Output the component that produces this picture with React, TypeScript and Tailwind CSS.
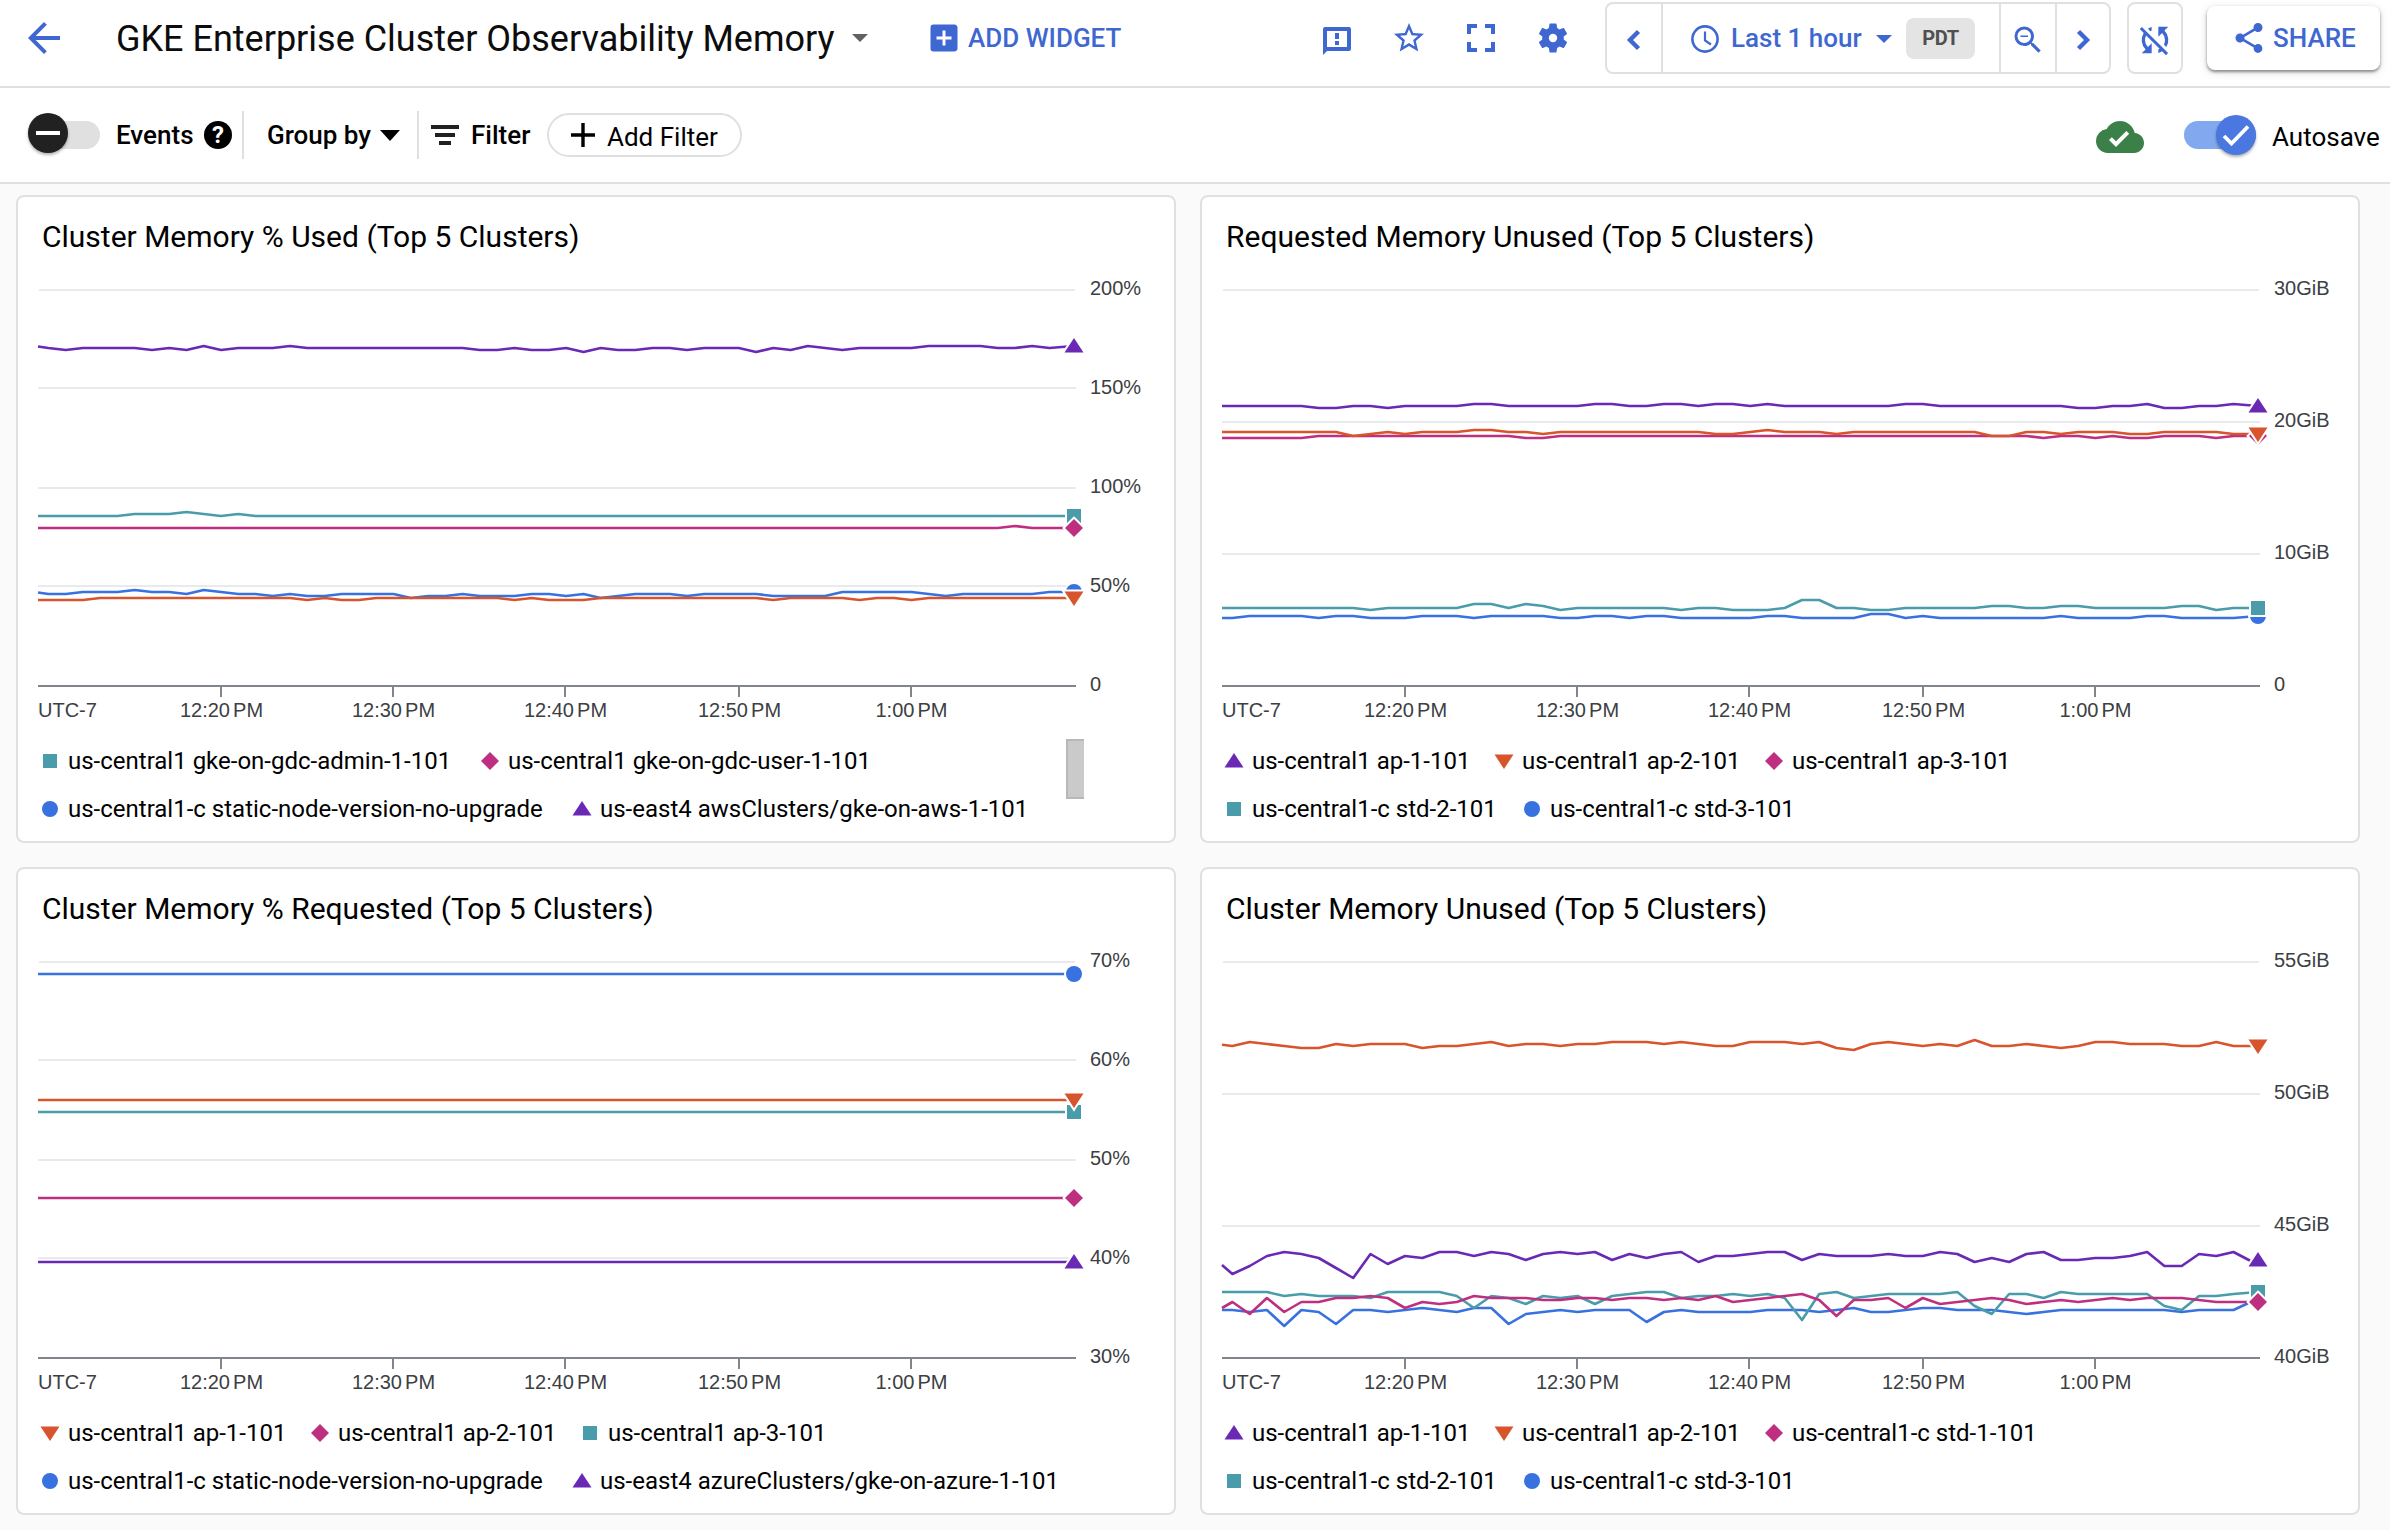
import React from "react";
import { MdArrowBack, MdAddBox, MdStarBorder, MdZoomOut, MdSyncDisabled, MdShare, MdCloudDone } from "react-icons/md";

type Shape = "square" | "diamond" | "circle" | "up" | "down";

const TEAL = "#4a9cab";
const PINK = "#bf2f80";
const BLUE = "#3871e0";
const PURPLE = "#6929b5";
const ORANGE = "#d8542c";

const COLORS: Record<Shape, string> = {
  square: TEAL,
  diamond: PINK,
  circle: BLUE,
  up: PURPLE,
  down: ORANGE,
};

/* Samples are "minute:y" pairs, the minute counted from 12:20 PM. */
interface Series {
  shape: Shape;
  data: string;
}

interface LegendItem {
  shape: Shape;
  label: string;
  width: string;
}

interface ChartSpec {
  title: string;
  top: number;
  gridYs: number[];
  labels: string[];
  series: Series[];
  legend: LegendItem[][];
  scrollbar?: boolean;
}

const X0 = 221;
const STEP = 17.26;
const START = -10.6;
const END = 49.42;

const CHARTS: ChartSpec[] = [
  {
    title: "Cluster Memory % Used (Top 5 Clusters)",
    top: 265,
    gridYs: [290, 388, 488, 586, 686],
    labels: ["200%", "150%", "100%", "50%", "0"],
    series: [
      {
        shape: "up",
        data: "S:346.5 -10:348 -9:350 -8:348 -5:348 -4:350 -3:348 -2:350 -1:346 0:350 1:348 3:348 4:346 5:348 14:348 15:350 16:350 17:348 18:350 19:350 20:348 21:352 22:348 23:350 24:350 25:348 26:348 27:350 28:348 30:348 31:352 32:348 33:350 34:346 35:348 36:350 37:348 40:348 41:346 44:346 45:348 46:348 47:346 48:348 E:346",
      },
      { shape: "square", data: "S:516 -6:516 -5:514 -3:514 -2:512 -1:514 0:516 1:514 2:516 E:516" },
      { shape: "diamond", data: "S:528 45:528 46:526 47:528 E:528" },
      {
        shape: "circle",
        data: "S:592.5 -10:594 -9:594 -8:592 -6:592 -5:590 -4:592 -3:592 -2:594 -1:590 0:592 1:594 2:594 3:596 4:594 5:596 6:596 7:594 10:594 11:598 12:596 13:596 14:594 15:596 17:596 18:594 19:594 20:596 21:594 22:598 23:596 24:594 26:594 27:596 28:594 31:594 32:596 35:596 36:592 40:592 41:594 42:596 43:594 47:594 48:592 E:592",
      },
      {
        shape: "down",
        data: "S:600 -8:600 -7:598 4:598 5:600 6:598 7:600 8:600 9:598 16:598 17:600 18:598 19:600 21:600 22:598 31:598 32:600 33:598 36:598 37:600 38:598 39:598 40:600 41:598 E:598",
      },
    ],
    legend: [
      [
        { shape: "square", label: "us-central1 gke-on-gdc-admin-1-101", width: "w-[440px]" },
        { shape: "diamond", label: "us-central1 gke-on-gdc-user-1-101", width: "w-[440px]" },
      ],
      [
        { shape: "circle", label: "us-central1-c static-node-version-no-upgrade", width: "w-[532px]" },
        { shape: "up", label: "us-east4 awsClusters/gke-on-aws-1-101", width: "w-[480px]" },
      ],
    ],
    scrollbar: true,
  },
  {
    title: "Requested Memory Unused (Top 5 Clusters)",
    top: 265,
    gridYs: [290, 422, 554, 686],
    labels: ["30GiB", "20GiB", "10GiB", "0"],
    series: [
      {
        shape: "up",
        data: "S:406 -6:406 -5:408 -4:408 -3:406 -2:406 -1:408 0:406 3:406 4:404 5:404 6:406 10:406 11:404 12:404 13:406 14:406 15:404 16:404 17:406 18:404 19:404 20:406 21:404 22:406 28:406 29:404 30:404 31:406 38:406 39:408 40:408 41:406 42:406 43:404 44:408 45:408 46:406 47:406 48:404 E:406",
      },
      {
        shape: "diamond",
        data: "S:438 -6:438 -5:436 6:436 7:438 8:438 9:436 36:436 37:438 38:436 39:436 40:438 41:436 42:438 43:438 44:436 46:436 47:438 48:436 E:436",
      },
      {
        shape: "down",
        data: "S:432 -4:432 -3:436 -2:434 -1:432 0:434 1:432 3:432 4:430 5:430 6:432 7:432 8:434 9:432 17:432 18:434 19:434 20:432 21:430 22:432 24:432 25:434 26:432 33:432 34:436 35:436 36:432 37:432 38:434 39:432 41:432 42:434 43:434 44:432 47:432 48:434 E:434",
      },
      {
        shape: "circle",
        data: "S:618 -10:618 -9:616 -6:616 -5:618 -4:616 -3:616 -2:618 0:618 1:616 3:616 4:618 5:616 8:616 9:618 10:618 11:616 12:616 13:618 14:616 15:616 16:618 20:618 21:616 22:616 23:618 26:618 27:614 28:614 29:618 30:616 31:618 37:618 38:616 39:618 42:618 43:616 44:616 45:618 48:618 E:616",
      },
      {
        shape: "square",
        data: "S:608 -3:608 -2:610 -1:608 3:608 4:604 5:604 6:608 7:604 8:606 9:610 10:608 15:608 16:610 17:608 18:608 19:610 21:610 22:608 23:600 24:600 25:608 26:608 27:610 28:610 29:608 33:608 34:606 35:606 36:608 37:608 38:606 39:606 40:608 44:608 45:606 46:606 47:610 48:608 E:608",
      },
    ],
    legend: [
      [
        { shape: "up", label: "us-central1 ap-1-101", width: "w-[270px]" },
        { shape: "down", label: "us-central1 ap-2-101", width: "w-[270px]" },
        { shape: "diamond", label: "us-central1 ap-3-101", width: "w-[270px]" },
      ],
      [
        { shape: "square", label: "us-central1-c std-2-101", width: "w-[298px]" },
        { shape: "circle", label: "us-central1-c std-3-101", width: "w-[298px]" },
      ],
    ],
  },
  {
    title: "Cluster Memory % Requested (Top 5 Clusters)",
    top: 937,
    gridYs: [962, 1060, 1160, 1258, 1358],
    labels: ["70%", "60%", "50%", "40%", "30%"],
    series: [
      { shape: "circle", data: "S:974 E:974" },
      { shape: "square", data: "S:1112 E:1112" },
      { shape: "down", data: "S:1100 E:1100" },
      { shape: "diamond", data: "S:1198 E:1198" },
      { shape: "up", data: "S:1262 E:1262" },
    ],
    legend: [
      [
        { shape: "down", label: "us-central1 ap-1-101", width: "w-[270px]" },
        { shape: "diamond", label: "us-central1 ap-2-101", width: "w-[270px]" },
        { shape: "square", label: "us-central1 ap-3-101", width: "w-[270px]" },
      ],
      [
        { shape: "circle", label: "us-central1-c static-node-version-no-upgrade", width: "w-[532px]" },
        { shape: "up", label: "us-east4 azureClusters/gke-on-azure-1-101", width: "w-[520px]" },
      ],
    ],
  },
  {
    title: "Cluster Memory Unused (Top 5 Clusters)",
    top: 937,
    gridYs: [962, 1094, 1226, 1358],
    labels: ["55GiB", "50GiB", "45GiB", "40GiB"],
    series: [
      {
        shape: "up",
        data: "S:1265 -10:1274 -9:1266 -8:1256 -7:1252 -6:1254 -5:1258 -4:1268 -3:1278 -2:1254 -1:1264 0:1256 1:1258 2:1252 3:1252 4:1256 5:1252 6:1254 7:1260 8:1254 9:1252 10:1254 11:1252 12:1260 13:1254 14:1258 15:1254 16:1252 17:1262 18:1256 19:1256 20:1254 21:1252 22:1252 23:1260 24:1254 25:1256 27:1256 28:1254 29:1256 30:1256 31:1252 32:1254 33:1262 34:1258 35:1262 36:1254 37:1252 38:1260 39:1260 40:1258 41:1258 42:1256 43:1252 44:1266 45:1266 46:1254 47:1256 48:1252 49:1261 E:1260",
      },
      {
        shape: "down",
        data: "S:1044.7 -10:1046 -9:1042 -8:1044 -7:1046 -6:1048 -5:1048 -4:1044 -3:1046 -2:1044 0:1044 1:1048 2:1046 3:1046 4:1044 5:1042 6:1046 7:1044 8:1044 9:1046 10:1044 11:1044 12:1042 14:1042 15:1044 16:1042 17:1044 18:1046 19:1046 20:1042 22:1042 23:1044 24:1042 25:1048 26:1050 27:1044 28:1042 29:1044 30:1046 31:1044 32:1046 33:1040 34:1046 35:1046 36:1044 37:1046 38:1048 39:1046 40:1042 41:1042 42:1044 44:1044 45:1046 46:1046 47:1042 48:1046 E:1046",
      },
      {
        shape: "circle",
        data: "S:1310 -10:1310 -9:1312 -8:1310 -7:1326 -6:1310 -5:1312 -4:1324 -3:1310 -2:1310 -1:1312 0:1310 1:1308 2:1310 3:1312 4:1308 5:1308 6:1324 7:1314 8:1312 9:1310 10:1312 11:1310 13:1310 14:1322 15:1312 16:1310 17:1312 20:1312 21:1310 23:1310 24:1312 25:1310 26:1308 27:1312 28:1312 29:1310 30:1308 31:1308 32:1310 34:1310 35:1312 36:1314 37:1312 38:1310 44:1310 45:1312 46:1310 48:1310 49:1302 E:1301",
      },
      {
        shape: "square",
        data: "S:1292 -8:1292 -7:1296 -6:1294 -5:1296 -3:1296 -2:1298 -1:1292 2:1292 3:1296 4:1308 5:1296 6:1298 7:1304 8:1296 9:1298 10:1296 11:1304 12:1296 13:1294 14:1292 15:1292 16:1298 17:1296 18:1296 19:1294 20:1296 21:1294 22:1298 23:1320 24:1294 25:1292 26:1298 27:1296 28:1294 31:1294 32:1292 33:1306 34:1314 35:1294 36:1294 37:1298 38:1292 39:1294 43:1294 44:1306 45:1310 46:1296 47:1296 48:1294 E:1292",
      },
      {
        shape: "diamond",
        data: "S:1308 -10:1302 -9:1314 -8:1298 -7:1312 -6:1302 -5:1302 -4:1298 -3:1298 -2:1296 -1:1298 0:1308 1:1302 2:1304 3:1302 4:1296 5:1298 7:1298 8:1300 9:1300 10:1298 11:1298 12:1300 13:1298 14:1298 15:1300 16:1298 17:1300 18:1296 19:1302 20:1300 21:1298 22:1296 23:1294 24:1300 25:1316 26:1300 27:1300 28:1298 29:1308 30:1298 31:1304 32:1302 33:1300 34:1298 35:1300 36:1304 37:1302 38:1300 39:1302 40:1300 41:1298 42:1300 43:1298 45:1298 46:1300 47:1302 E:1302",
      },
    ],
    legend: [
      [
        { shape: "up", label: "us-central1 ap-1-101", width: "w-[270px]" },
        { shape: "down", label: "us-central1 ap-2-101", width: "w-[270px]" },
        { shape: "diamond", label: "us-central1-c std-1-101", width: "w-[298px]" },
      ],
      [
        { shape: "square", label: "us-central1-c std-2-101", width: "w-[298px]" },
        { shape: "circle", label: "us-central1-c std-3-101", width: "w-[298px]" },
      ],
    ],
  },
];

const TICKS = [
  { x: 221, label: "12:20 PM" },
  { x: 393, label: "12:30 PM" },
  { x: 565, label: "12:40 PM" },
  { x: 739, label: "12:50 PM" },
  { x: 911, label: "1:00 PM" },
];

function parse(data: string): [number, number][] {
  return data.split(" ").map((pair) => {
    const [m, y] = pair.split(":");
    const minute = m === "S" ? START : m === "E" ? END : Number(m);
    return [X0 + STEP * minute, Number(y)];
  });
}

function Marker({ shape, x, y, outline }: { shape: Shape; x: number; y: number; outline?: boolean }) {
  const common = {
    fill: COLORS[shape],
    stroke: outline ? "#ffffff" : "none",
    strokeWidth: outline ? 4 : 0,
    paintOrder: "stroke",
  };
  if (shape === "square") return <rect x={x - 7} y={y - 7} width={14} height={14} {...common} />;
  if (shape === "circle") return <circle cx={x} cy={y} r={8} {...common} />;
  if (shape === "diamond") return <path d={`M${x} ${y - 9}l9 9l-9 9l-9 -9z`} {...common} />;
  if (shape === "up") return <path d={`M${x} ${y - 8}l9.5 14.5h-19z`} {...common} />;
  return <path d={`M${x} ${y + 8}l9.5 -14.5h-19z`} {...common} />;
}

function Plot({ chart }: { chart: ChartSpec }) {
  const { top, gridYs, labels, series } = chart;
  const axisY = gridYs[gridYs.length - 1];
  const labelStep = (axisY - gridYs[0]) / (gridYs.length - 1);
  return (
    <svg
      className="block h-[460px] w-[1156px] font-['Liberation_Sans',Arial,sans-serif] text-[20px]"
      viewBox={`18 ${top} 1156 460`}
      fill="#3c4043"
    >
      {gridYs.slice(0, -1).map((y, i) => (
        <rect key={y} x={i === 0 ? 39 : 38} y={y - 1} width={i === 0 ? 1036 : 1038} height={2} fill="#e8eaed" />
      ))}
      <rect x={38} y={axisY - 1} width={1038} height={2} fill="#80868b" />
      {TICKS.map((t) => (
        <rect key={t.x} x={t.x - 1} y={axisY} width={2} height={11} fill="#80868b" />
      ))}
      {series.map((s) => (
        <polyline
          key={s.shape}
          points={parse(s.data).map(([x, y]) => `${x.toFixed(1)},${y}`).join(" ")}
          fill="none"
          stroke={COLORS[s.shape]}
          strokeWidth={2.6}
          strokeLinejoin="round"
        />
      ))}
      {series.map((s) => {
        const pts = parse(s.data);
        return <Marker key={s.shape} shape={s.shape} x={1074} y={pts[pts.length - 1][1]} outline />;
      })}
      {labels.map((l, i) => (
        <text key={l} x={1090} y={gridYs[0] + 5 + i * labelStep}>
          {l}
        </text>
      ))}
      <text x={38} y={axisY + 31}>
        UTC-7
      </text>
      {TICKS.map((t) => (
        <text key={t.x} x={t.x + 0.5} y={axisY + 31} textAnchor="middle" className="[word-spacing:-2.5px]">
          {t.label}
        </text>
      ))}
    </svg>
  );
}

function ChartCard({ chart }: { chart: ChartSpec }) {
  return (
    <section className="relative h-[648px] w-[1160px] overflow-hidden rounded-lg border-2 border-[#e0e0e0] bg-white">
      <h2 className="h-[68px] whitespace-nowrap pl-6 pt-[22px] text-[30px] leading-9 text-black">
        {chart.title}
      </h2>
      <Plot chart={chart} />
      <div className="flex flex-col pl-[22px] pt-3">
        {chart.legend.map((row, i) => (
          <div key={i} className="flex h-12 items-center">
            {row.map((item) => (
              <div key={item.label} className={`flex shrink-0 items-center gap-2 ${item.width}`}>
                <svg className="size-5 shrink-0" viewBox="0 0 20 20">
                  <Marker shape={item.shape} x={10} y={10} />
                </svg>
                <span className="whitespace-nowrap text-[24px] leading-8 text-black">{item.label}</span>
              </div>
            ))}
          </div>
        ))}
      </div>
      {chart.scrollbar && (
        <div className="absolute left-[1048px] top-[542px] h-[60px] w-[18px] border-2 border-r-0 border-[#b8b8b8] bg-[#cacaca]" />
      )}
    </section>
  );
}

function Caret({ className }: { className: string }) {
  return (
    <svg className={className} viewBox="0 0 16 8" preserveAspectRatio="none">
      <path d="M0 0h16l-8 8z" fill="currentColor" />
    </svg>
  );
}

function Header() {
  return (
    <header className="flex h-[88px] items-center border-b-2 border-[#e0e0e0] bg-white pb-[10px] pl-5 pr-[10px] text-[#3f67d2]">
      <MdArrowBack className="size-12 shrink-0" />
      <h1 className="ml-12 mt-[2px] w-[736px] shrink-0 whitespace-nowrap text-[36px] leading-10 text-[#0c0c0c]">
        GKE Enterprise Cluster Observability Memory
      </h1>
      <Caret className="h-2 w-4 shrink-0 text-[#616161]" />
      <MdAddBox className="ml-[58px] size-9 shrink-0" />
      <span className="ml-[6px] whitespace-nowrap text-[26px] font-medium leading-8">ADD WIDGET</span>

      <div className="ml-auto flex shrink-0 items-center gap-9">
        <svg className="size-9" viewBox="0 -1 36 36" fill="currentColor">
          <path fillRule="evenodd" d="M6 6h24a2 2 0 0 1 2 2v20a2 2 0 0 1-2 2H8l-4 4V8a2 2 0 0 1 2-2zM8 10v16h20V10zM16 12h4v6h-4zM16 20h4v4h-4z" />
        </svg>
        <MdStarBorder className="size-9" />
        <svg className="size-9" viewBox="3 3 18 18" fill="currentColor">
          <path d="M7 14H5v5h5v-2H7v-3zM5 10h2V7h3V5H5v5zm12 7h-3v2h5v-5h-2v3zM14 5v2h3v3h2V5h-5z" />
        </svg>
        <svg className="size-9" viewBox="0 0 24 24" fill="currentColor">
          <path d="M19.14 12.94c.04-.3.06-.61.06-.94 0-.32-.02-.64-.07-.94l2.03-1.58c.18-.14.23-.41.12-.61l-1.92-3.32c-.12-.22-.37-.29-.59-.22l-2.39.96c-.5-.38-1.03-.7-1.62-.94l-.36-2.54c-.04-.24-.24-.41-.48-.41h-3.84c-.24 0-.43.17-.47.41l-.36 2.54c-.59.24-1.13.57-1.62.94l-2.39-.96c-.22-.08-.47 0-.59.22L2.74 8.87c-.12.21-.08.47.12.61l2.03 1.58c-.05.3-.09.63-.09.94s.02.64.07.94l-2.03 1.58c-.18.14-.23.41-.12.61l1.92 3.32c.12.22.37.29.59.22l2.39-.96c.5.38 1.03.7 1.62.94l.36 2.54c.05.24.24.41.48.41h3.84c.24 0 .44-.17.47-.41l.36-2.54c.59-.24 1.13-.56 1.62-.94l2.39.96c.22.08.47 0 .59-.22l1.92-3.32c.12-.22.07-.47-.12-.61l-2.01-1.58z" />
          <circle cx="12" cy="12" r="2.8" fill="#ffffff" />
        </svg>
      </div>

      <div className="ml-[34px] flex h-[72px] w-[506px] shrink-0 rounded-lg border-2 border-[#e0e0e0]">
        <div className="flex w-[56px] shrink-0 items-center justify-center border-r-2 border-[#e0e0e0] pt-1">
          <svg className="h-6 w-4" viewBox="0 0 16 24" fill="none" stroke="currentColor" strokeWidth={4.4}>
            <path d="M12.5 3.5L4 12l8.5 8.5" />
          </svg>
        </div>
        <div className="flex w-[338px] shrink-0 items-center border-r-2 border-[#e0e0e0] pl-[26px]">
          <svg className="mt-[2px] size-8 shrink-0" viewBox="0 0 32 32" fill="none" stroke="currentColor" strokeWidth={2.6}>
            <circle cx="16" cy="16" r="12.6" />
            <path d="M16 8.5v9l6 4" strokeWidth={2.2} />
          </svg>
          <span className="ml-[10px] w-[145px] whitespace-nowrap text-[26px] font-medium leading-8">Last 1 hour</span>
          <Caret className="mt-[2px] h-2 w-4 shrink-0" />
          <span className="ml-[14px] flex h-[41px] w-[69px] items-center justify-center rounded-lg bg-[#e4e4e4] text-[20px] font-bold tracking-[-0.3px] text-[#505050]">
            PDT
          </span>
        </div>
        <div className="flex w-[56px] shrink-0 items-center justify-center border-r-2 border-[#e0e0e0] pt-1">
          <MdZoomOut className="size-9" />
        </div>
        <div className="flex flex-1 items-center justify-center pt-1">
          <svg className="h-6 w-4" viewBox="0 0 16 24" fill="none" stroke="currentColor" strokeWidth={4.4}>
            <path d="M3.5 3.5L12 12l-8.5 8.5" />
          </svg>
        </div>
      </div>
      <div className="ml-4 flex h-[72px] w-14 shrink-0 items-center justify-center rounded-lg border-2 border-[#e0e0e0] pt-1">
        <MdSyncDisabled className="size-10" />
      </div>
      <div className="ml-6 flex h-16 w-[173px] shrink-0 items-center rounded-lg bg-white pl-6 shadow-[0_2px_3px_rgba(0,0,0,0.4),0_2px_8px_rgba(0,0,0,0.15)]">
        <MdShare className="size-9 shrink-0" />
        <span className="ml-[6px] text-[26px] font-medium leading-8">SHARE</span>
      </div>
    </header>
  );
}

function Toolbar() {
  return (
    <div className="flex h-24 items-center border-b-2 border-[#e0e0e0] bg-white pl-7 pr-[10px] text-[26px] leading-8 text-black">
      <div className="flex h-7 w-[72px] shrink-0 items-center rounded-full bg-[#e0e0e0]">
        <div className="-mt-1 flex size-10 items-center justify-center rounded-full bg-[#212121] shadow-[0_2px_3px_rgba(0,0,0,0.3)]">
          <div className="h-1 w-6 bg-white" />
        </div>
      </div>
      <span className="ml-4 w-[88px] whitespace-nowrap font-medium">Events</span>
      <span className="flex size-7 shrink-0 items-center justify-center rounded-full bg-black text-[24px] font-bold text-white">
        ?
      </span>
      <div className="ml-[10px] h-12 w-[2px] bg-[#e0e0e0]" />
      <span className="ml-[23px] w-[113px] whitespace-nowrap font-medium">Group by</span>
      <Caret className="h-[11px] w-5 shrink-0" />
      <div className="ml-[17px] h-12 w-[2px] bg-[#e0e0e0]" />
      <div className="ml-3 flex w-7 shrink-0 flex-col items-center gap-1">
        <div className="h-1 w-7 bg-[#212121]" />
        <div className="h-1 w-5 bg-[#212121]" />
        <div className="h-1 w-3 bg-[#212121]" />
      </div>
      <span className="ml-3 w-[76px] whitespace-nowrap font-medium">Filter</span>
      <div className="flex h-11 w-[195px] shrink-0 items-center rounded-full border-2 border-[#e0e0e0] pl-[22px]">
        <svg className="size-6 shrink-0" viewBox="0 0 24 24" stroke="currentColor" strokeWidth={3.4}>
          <path d="M12 0v24M0 12h24" />
        </svg>
        <span className="ml-3 mt-[3px] whitespace-nowrap">Add Filter</span>
      </div>

      <div className="ml-auto flex shrink-0 items-center">
        <MdCloudDone className="mt-1 size-12 text-[#3b8049]" />
        <div className="ml-10 flex h-7 w-[72px] items-center justify-end rounded-full bg-[#82a8ef]">
          <div className="flex size-10 shrink-0 items-center justify-center rounded-full bg-[#4a78e0] shadow-[0_2px_3px_rgba(0,0,0,0.3)]">
            <svg className="h-[22px] w-7" viewBox="0 0 28 22" fill="none" stroke="#ffffff" strokeWidth={3.8}>
              <path d="M2 12l7.500 7.500L26 2.500" />
            </svg>
          </div>
        </div>
        <span className="ml-4 mt-[3px] w-[108px] whitespace-nowrap">Autosave</span>
      </div>
    </div>
  );
}

export default function App() {
  return (
    <div className="h-[1530px] w-[2390px] overflow-hidden bg-[#fafafa] font-['Roboto',sans-serif]">
      <Header />
      <Toolbar />
      <main className="grid grid-cols-[1160px_1160px] gap-6 pl-4 pt-[11px]">
        {CHARTS.map((c) => (
          <ChartCard key={c.title} chart={c} />
        ))}
      </main>
    </div>
  );
}
